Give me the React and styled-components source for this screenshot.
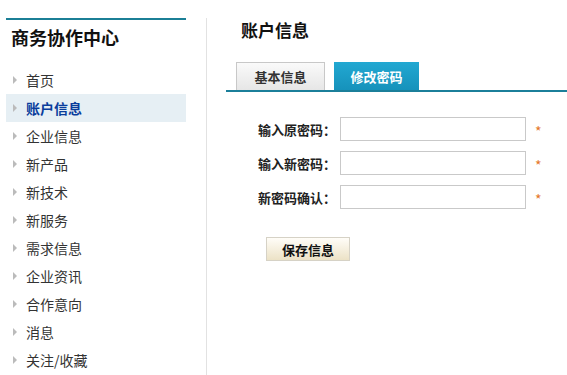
import React from 'react';
import styled, { createGlobalStyle } from 'styled-components';

const GlobalStyle = createGlobalStyle`
  body {
    margin: 0;
    background: #fff;
    font-family: "Noto Sans CJK SC", "Liberation Sans", sans-serif;
    color: #333;
  }
`;

const Page = styled.div`
  display: flex;
  width: 567px;
  height: 375px;
  overflow: hidden;
`;

const Sidebar = styled.div`
  width: 180px;
  margin-left: 6px;
  padding-top: 18px;
`;

const SideTitle = styled.div`
  border-top: 2px solid #1b7f96;
  height: 48px;
  box-sizing: border-box;
  padding: 5px 0 0 5px;
  line-height: 24px;
  font-size: 18px;
  font-weight: bold;
  color: #111;
`;

const Menu = styled.ul`
  list-style: none;
  margin: 0;
  padding: 0;
`;

const MenuItem = styled.li`
  display: flex;
  align-items: center;
  height: 28px;
  padding-left: 7px;
  font-size: 14px;
  background: ${({ active }) => (active ? '#e6eff4' : 'transparent')};
  color: ${({ active }) => (active ? '#0a3d9c' : '#333')};
  font-weight: ${({ active }) => (active ? 'bold' : 'normal')};
`;

const Arrow = styled.span`
  width: 0;
  height: 0;
  border-top: 4px solid transparent;
  border-bottom: 4px solid transparent;
  border-left: 4px solid #bbb;
  margin-right: 9px;
`;

const Divider = styled.div`
  width: 1px;
  margin: 18px 19px 0 20px;
  background: #e2e2e2;
`;

const Main = styled.div`
  flex: 1;
  padding-top: 16px;
`;

const Heading = styled.div`
  padding-left: 15px;
  height: 28px;
  line-height: 28px;
  font-size: 17px;
  font-weight: bold;
  color: #111;
`;

const Tabs = styled.div`
  display: flex;
  gap: 9px;
  margin-top: 18px;
  padding-left: 10px;
  border-bottom: 2px solid #1b7f9a;
`;

const Tab = styled.div`
  height: 28px;
  box-sizing: border-box;
  width: ${({ w }) => w}px;
  display: flex;
  align-items: center;
  justify-content: center;
  font-size: 13px;
  font-weight: bold;
  color: ${({ active }) => (active ? '#fff' : '#333')};
  background: ${({ active }) =>
    active
      ? 'linear-gradient(#22a8d2, #1692bb)'
      : 'linear-gradient(#fafafa, #e6e6e6)'};
  border: ${({ active }) => (active ? 'none' : '1px solid #c8c8c8')};
  border-bottom: none;
`;

const Form = styled.div`
  display: grid;
  grid-template-columns: 110px 186px auto;
  column-gap: 4px;
  row-gap: 10px;
  align-items: center;
  margin-top: 25px;
`;

const Label = styled.label`
  text-align: right;
  font-size: 13px;
  font-weight: bold;
  color: #222;
`;

const Input = styled.input`
  height: 24px;
  box-sizing: border-box;
  border: 1px solid #c9c9c9;
  padding: 0 4px;
  outline: none;
`;

const Star = styled.span`
  color: #e5772a;
  font-size: 14px;
  padding: 3px 0 0 5px;
`;

const SaveButton = styled.button`
  margin: 28px 0 0 40px;
  width: 84px;
  height: 24px;
  border: 1px solid #d6d2c6;
  background: linear-gradient(#fffdf8, #ece2c6);
  font-family: inherit;
  font-size: 13px;
  font-weight: bold;
  color: #111;
  padding: 0;
`;

const items = [
  '首页',
  '账户信息',
  '企业信息',
  '新产品',
  '新技术',
  '新服务',
  '需求信息',
  '企业资讯',
  '合作意向',
  '消息',
  '关注/收藏',
];

const fields = ['输入原密码：', '输入新密码：', '新密码确认：'];

export default function App() {
  return (
    <Page>
      <GlobalStyle />
      <Sidebar>
        <SideTitle>商务协作中心</SideTitle>
        <Menu>
          {items.map((item) => (
            <MenuItem key={item} active={item === '账户信息'}>
              <Arrow />
              {item}
            </MenuItem>
          ))}
        </Menu>
      </Sidebar>
      <Divider />
      <Main>
        <Heading>账户信息</Heading>
        <Tabs>
          <Tab w={89}>基本信息</Tab>
          <Tab w={85} active>
            修改密码
          </Tab>
        </Tabs>
        <Form>
          {fields.map((f) => (
            <React.Fragment key={f}>
              <Label>{f}</Label>
              <Input type="password" />
              <Star>*</Star>
            </React.Fragment>
          ))}
        </Form>
        <SaveButton>保存信息</SaveButton>
      </Main>
    </Page>
  );
}
